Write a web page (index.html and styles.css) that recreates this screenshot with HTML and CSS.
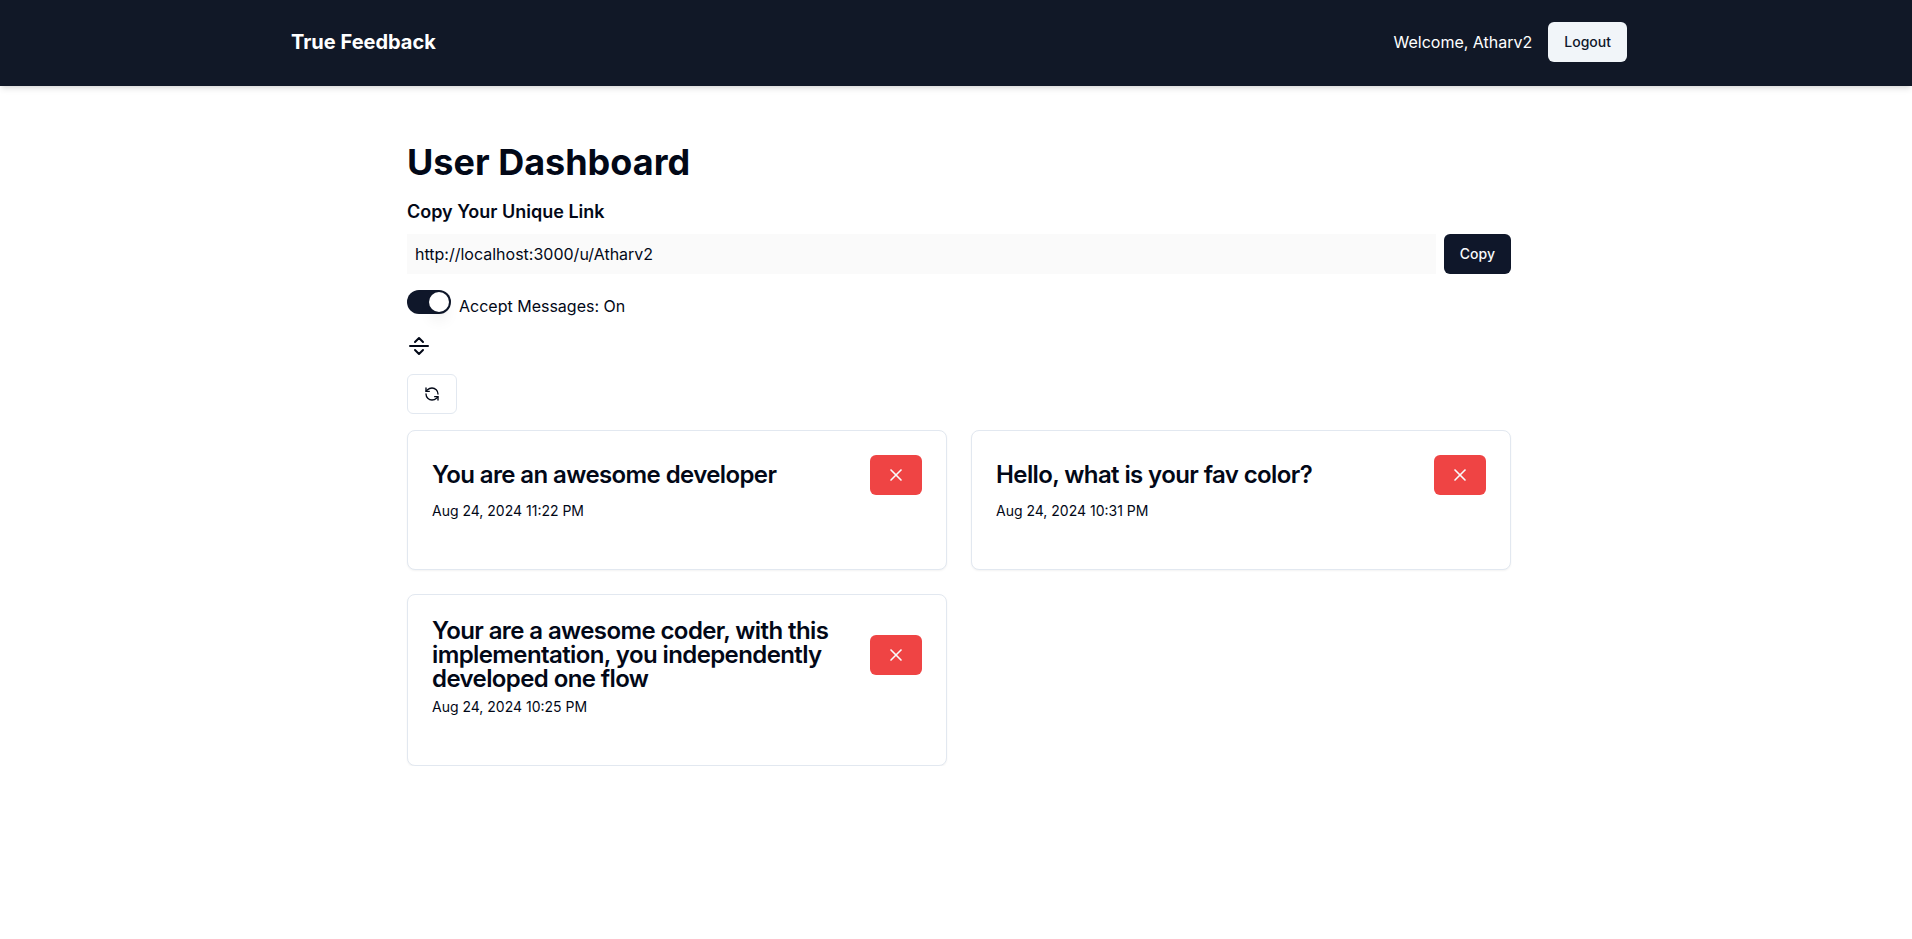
FILE: index.html
```html
<!DOCTYPE html>
<html lang="en">
<head>
<meta charset="utf-8">
<title>True Feedback</title>
<link rel="stylesheet" href="styles.css">
</head>
<body>
<nav class="navbar">
  <div class="navbar-inner">
    <a class="brand">True Feedback</a>
    <div class="account">
      <span>Welcome, Atharv2</span>
      <button class="btn btn-light">Logout</button>
    </div>
  </div>
</nav>
<main class="dashboard">
  <h1>User Dashboard</h1>
  <h2>Copy Your Unique Link</h2>
  <div class="link-row">
    <input class="link-input" type="text" value="http://localhost:3000/u/Atharv2" disabled>
    <button class="btn btn-dark">Copy</button>
  </div>
  <div class="accept-row">
    <button class="switch" role="switch" aria-checked="true"><span class="thumb"></span></button>
    <span class="accept-label">Accept Messages: On</span>
  </div>
  <svg class="separator" width="24" height="24" viewBox="0 0 24 24" fill="none" stroke="currentColor" stroke-width="2" stroke-linecap="round" stroke-linejoin="round"><line x1="3" x2="21" y1="12" y2="12"/><polyline points="8 8 12 4 16 8"/><polyline points="16 16 12 20 8 16"/></svg>
  <button class="btn btn-outline" aria-label="Refresh">
    <svg width="16" height="16" viewBox="0 0 24 24" fill="none" stroke="currentColor" stroke-width="2" stroke-linecap="round" stroke-linejoin="round"><path d="M21 12a9 9 0 0 0-9-9 9.75 9.75 0 0 0-6.74 2.74L3 8"/><path d="M3 3v5h5"/><path d="M3 12a9 9 0 0 0 9 9 9.75 9.75 0 0 0 6.74-2.74L21 16"/><path d="M16 16h5v5"/></svg>
  </button>
  <div class="cards">
    <article class="card">
      <div class="card-head">
        <h3>You are an awesome developer</h3>
        <button class="btn btn-danger" aria-label="Delete"><svg width="20" height="20" viewBox="0 0 24 24" fill="none" stroke="currentColor" stroke-width="2" stroke-linecap="round" stroke-linejoin="round"><path d="M18 6 6 18"/><path d="m6 6 12 12"/></svg></button>
      </div>
      <div class="date">Aug 24, 2024 11:22 PM</div>
    </article>
    <article class="card">
      <div class="card-head">
        <h3>Hello, what is your fav color?</h3>
        <button class="btn btn-danger" aria-label="Delete"><svg width="20" height="20" viewBox="0 0 24 24" fill="none" stroke="currentColor" stroke-width="2" stroke-linecap="round" stroke-linejoin="round"><path d="M18 6 6 18"/><path d="m6 6 12 12"/></svg></button>
      </div>
      <div class="date">Aug 24, 2024 10:31 PM</div>
    </article>
    <article class="card">
      <div class="card-head">
        <h3>Your are a awesome coder, with this implementation, you independently developed one flow</h3>
        <button class="btn btn-danger" aria-label="Delete"><svg width="20" height="20" viewBox="0 0 24 24" fill="none" stroke="currentColor" stroke-width="2" stroke-linecap="round" stroke-linejoin="round"><path d="M18 6 6 18"/><path d="m6 6 12 12"/></svg></button>
      </div>
      <div class="date">Aug 24, 2024 10:25 PM</div>
    </article>
  </div>
</main>
</body>
</html>
```
FILE: styles.css
```css
* { box-sizing: border-box; }
body {
  margin: 0;
  font-family: Inter, "Liberation Sans", sans-serif;
  font-size: 16px;
  line-height: 24px;
  color: #020817;
  background: #fff;
}
h1, h2, h3 { margin: 0; }
.navbar {
  height: 86px;
  padding: 22px 0 24px 6px;
  background: #111827;
  color: #fff;
  box-shadow: 0 4px 6px -1px rgb(0 0 0 / .1), 0 2px 4px -2px rgb(0 0 0 / .1);
}
.navbar-inner {
  display: flex;
  align-items: center;
  justify-content: space-between;
  width: 1336px;
  margin: 0 auto;
}
.brand { font-size: 20px; line-height: 28px; font-weight: 700; }
.account { display: flex; align-items: center; gap: 16px; }
.btn {
  display: inline-flex;
  align-items: center;
  justify-content: center;
  flex: none;
  height: 40px;
  padding: 8px 16px;
  border: 0;
  border-radius: 6px;
  font: 500 14px/20px Inter, "Liberation Sans", sans-serif;
}
.btn svg { display: block; }
.btn-light { background: #f1f5f9; color: #0f172a; }
.btn-dark { background: #0f172a; color: #f8fafc; }
.btn-outline { display: flex; border: 1px solid #e2e8f0; background: #fff; color: #020817; }
.btn-danger { background: #ef4444; color: #f8fafc; }
.dashboard {
  width: 1104px;
  margin: 56px auto 0;
  position: relative;
  left: 3px;
}
h1 { margin-bottom: 16px; font-size: 36px; line-height: 40px; font-weight: 700; }
h2 { margin-bottom: 8px; font-size: 18px; line-height: 28px; font-weight: 600; }
.link-row { display: flex; gap: 8px; margin-bottom: 16px; }
.link-input {
  flex: 1;
  height: 40px;
  padding: 8px;
  border: 0;
  background: #fafafa;
  color: #020817;
  font: 400 16px/24px Inter, "Liberation Sans", sans-serif;
}
.accept-row { display: flex; align-items: flex-start; gap: 8px; height: 28px; margin-bottom: 16px; }
.switch {
  display: flex;
  width: 44px;
  height: 24px;
  padding: 2px 2px 2px 22px;
  border: 0;
  border-radius: 12px;
  background: #0f172a;
}
.thumb {
  width: 20px;
  height: 20px;
  border-radius: 50%;
  background: #fff;
  box-shadow: 0 10px 15px -3px rgb(0 0 0 / .1), 0 4px 6px -4px rgb(0 0 0 / .1);
}
.accept-label { padding-top: 4px; }
.separator { display: block; margin-bottom: 16px; }
.cards { display: grid; grid-template-columns: 1fr 1fr; gap: 24px; margin-top: 16px; }
.card {
  padding: 24px 24px 48px;
  border: 1px solid #e2e8f0;
  border-radius: 8px;
  background: #fff;
  box-shadow: 0 1px 2px rgb(0 0 0 / .05);
}
.card-head { display: flex; align-items: center; justify-content: space-between; margin-bottom: 6px; }
h3 { font-size: 24px; line-height: 24px; font-weight: 600; letter-spacing: -0.6px; }
.date { font-size: 14px; line-height: 20px; }
```
